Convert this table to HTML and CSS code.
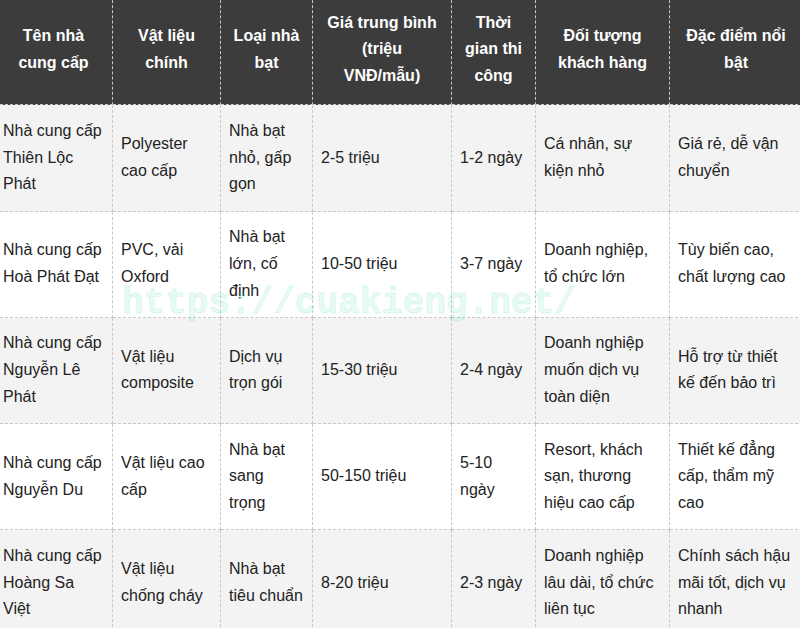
FILE: index.html
```html
<!DOCTYPE html>
<html lang="vi">
<head>
<meta charset="utf-8">
<title>Bảng so sánh nhà cung cấp nhà bạt</title>
<link rel="stylesheet" href="styles.css">
</head>
<body>
<div class="page">
  <table class="compare">
    <colgroup>
      <col class="c1"><col class="c2"><col class="c3"><col class="c4"><col class="c5"><col class="c6"><col class="c7">
    </colgroup>
    <thead>
      <tr>
        <th class="c1">Tên nhà cung cấp</th>
        <th class="c2">Vật liệu chính</th>
        <th class="c3">Loại nhà bạt</th>
        <th class="c4">Giá trung bình (triệu VNĐ/mẫu)</th>
        <th class="c5">Thời gian thi công</th>
        <th class="c6">Đối tượng khách hàng</th>
        <th class="c7">Đặc điểm nổi bật</th>
      </tr>
    </thead>
    <tbody>
      <tr class="alt">
        <td>Nhà cung cấp Thiên Lộc Phát</td>
        <td>Polyester cao cấp</td>
        <td>Nhà bạt nhỏ, gấp gọn</td>
        <td>2-5 triệu</td>
        <td>1-2 ngày</td>
        <td>Cá nhân, sự kiện nhỏ</td>
        <td>Giá rẻ, dễ vận chuyển</td>
      </tr>
      <tr>
        <td>Nhà cung cấp Hoà Phát Đạt</td>
        <td>PVC, vải Oxford</td>
        <td>Nhà bạt lớn, cố định</td>
        <td>10-50 triệu</td>
        <td>3-7 ngày</td>
        <td>Doanh nghiệp, tổ chức lớn</td>
        <td>Tùy biến cao, chất lượng cao</td>
      </tr>
      <tr class="alt">
        <td>Nhà cung cấp Nguyễn Lê Phát</td>
        <td>Vật liệu composite</td>
        <td>Dịch vụ trọn gói</td>
        <td>15-30 triệu</td>
        <td>2-4 ngày</td>
        <td>Doanh nghiệp muốn dịch vụ toàn diện</td>
        <td>Hỗ trợ từ thiết kế đến bảo trì</td>
      </tr>
      <tr>
        <td>Nhà cung cấp Nguyễn Du</td>
        <td>Vật liệu cao cấp</td>
        <td>Nhà bạt sang trọng</td>
        <td>50-150 triệu</td>
        <td>5-10 ngày</td>
        <td>Resort, khách sạn, thương hiệu cao cấp</td>
        <td>Thiết kế đẳng cấp, thẩm mỹ cao</td>
      </tr>
      <tr class="alt">
        <td>Nhà cung cấp Hoàng Sa Việt</td>
        <td>Vật liệu chống cháy</td>
        <td>Nhà bạt tiêu chuẩn</td>
        <td>8-20 triệu</td>
        <td>2-3 ngày</td>
        <td>Doanh nghiệp lâu dài, tổ chức liên tục</td>
        <td>Chính sách hậu mãi tốt, dịch vụ nhanh</td>
      </tr>
    </tbody>
  </table>
  <div class="watermark">https://cuakieng.net/</div>
</div>
</body>
</html>
```

FILE: styles.css
```css
html, body {
  margin: 0;
  padding: 0;
  background: #ffffff;
  overflow: hidden;
}

.page {
  position: relative;
  width: 800px;
  height: 628px;
  overflow: hidden;
}

.compare {
  margin: -6px 0 0 -6px;
  border-collapse: separate;
  border-spacing: 0;
  table-layout: fixed;
  width: 808px;
  font-family: "Liberation Sans", Arial, sans-serif;
  font-size: 16px;
  line-height: 26.75px;
  color: #222222;
  border-top: 1px dashed #c8c8c8;
  border-left: 1px dashed #c8c8c8;
}

.compare .c1 { width: 118px; }
.compare .c2 { width: 108px; }
.compare .c3 { width: 92px; }
.compare .c4 { width: 139px; }
.compare .c5 { width: 84px; }
.compare .c6 { width: 134px; }
.compare .c7 { width: 133px; }

.compare th,
.compare td {
  box-sizing: border-box;
  border-right: 1px dashed #c8c8c8;
  border-bottom: 1px dashed #c8c8c8;
  vertical-align: middle;
}

.compare th {
  background: #3c3c3c;
  color: #ffffff;
  font-weight: bold;
  text-align: center;
  padding: 14.5px 10px;
}

.compare td {
  background: #ffffff;
  text-align: left;
  padding: 12.5px 8px;
}

.compare tr.alt td {
  background: #f3f3f3;
}

.watermark {
  position: absolute;
  left: 122px;
  top: 286px;
  font-family: "Liberation Mono", "Courier New", monospace;
  font-weight: bold;
  font-size: 36px;
  line-height: 36px;
  color: rgba(0, 205, 145, 0.09);
  -webkit-text-stroke: 1.5px rgba(0, 205, 145, 0.09);
  white-space: nowrap;
  pointer-events: none;
}
```
